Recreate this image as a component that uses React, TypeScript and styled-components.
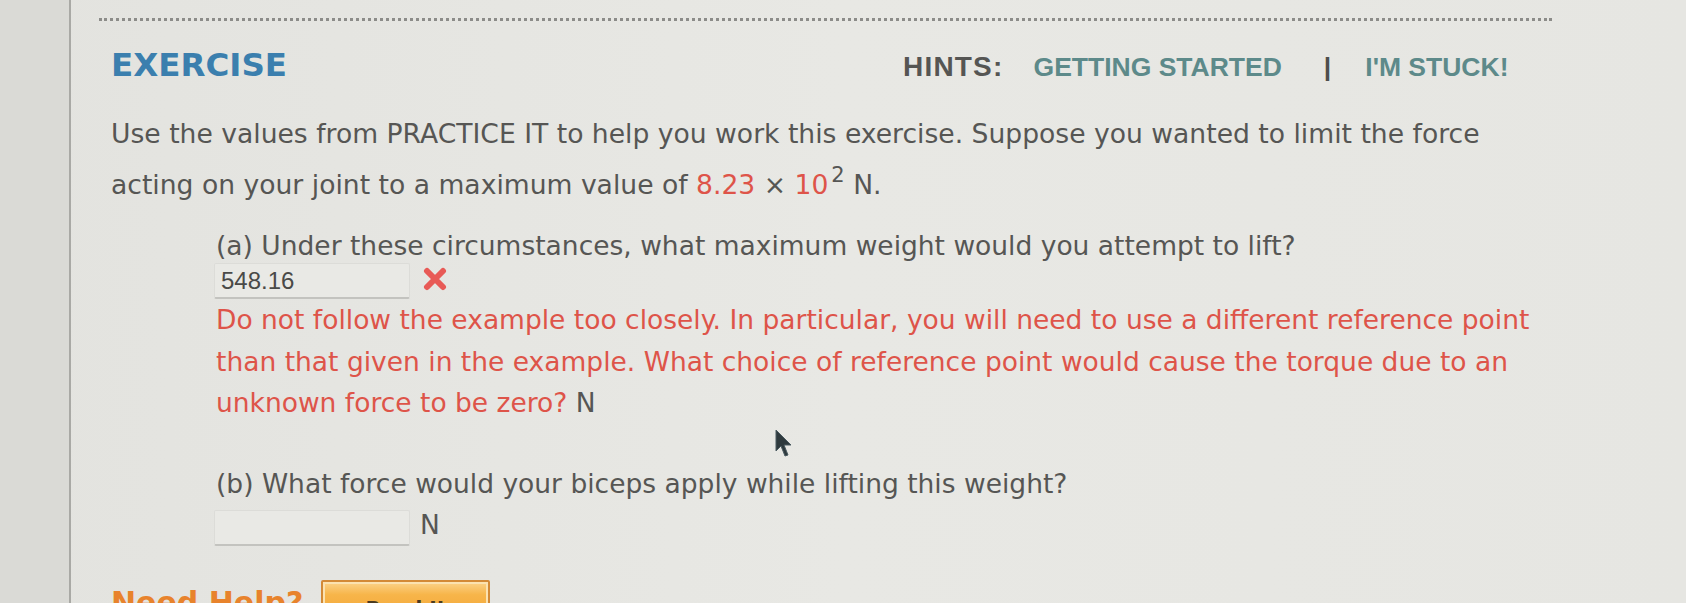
import React from "react";
import styled, { createGlobalStyle } from "styled-components";

const Global = createGlobalStyle`
  html, body { margin: 0; padding: 0; }
  body {
    background: #e5e5e1;
    font-family: "DejaVu Sans", Verdana, sans-serif;
    overflow: hidden;
  }
`;

const Page = styled.div`
  position: relative;
  display: flex;
  width: 1686px;
  height: 603px;
  overflow: hidden;
  background: linear-gradient(90deg, #e3e3df 0%, #e8e8e4 50%, #e6e6e2 100%);
`;

const Gutter = styled.div`
  width: 69px;
  flex: none;
  background: #dadad6;
  border-right: 2px solid #a9a9a5;
`;

const Content = styled.div`
  flex: 1;
  padding-left: 40px;
  display: flex;
  flex-direction: column;
`;

const DottedRule = styled.div`
  margin-top: 18px;
  margin-left: -12px;
  width: 1453px;
  height: 0;
  border-top: 3px dotted #8c8c89;
`;

const Header = styled.div`
  margin-top: 24px;
  display: grid;
  grid-template-columns: 792px auto;
  align-items: baseline;
  height: 40px;
`;

const Title = styled.h1`
  margin: 0;
  font-family: "DejaVu Sans", Verdana, sans-serif;
  font-weight: bold;
  font-size: 32.5px;
  line-height: 40px;
  color: #3b7fae;
`;

const Hints = styled.div`
  display: flex;
  align-items: baseline;
  font-family: "Liberation Sans", Arial, sans-serif;
  font-weight: bold;
  font-size: 26.5px;
  line-height: 40px;
`;

const HintLabel = styled.span`
  color: #555553;
  font-size: 28px;
  letter-spacing: 1.2px;
  margin-right: 30px;
`;

const HintLink = styled.span`
  color: #5d8a8a;
`;

const Sep = styled.span`
  color: #4e4e4c;
  margin: 0 34px 0 42px;
`;

const Para = styled.p`
  margin: 23px 0 0 0;
  font-size: 26.6px;
  line-height: 51px;
  color: #565654;
  width: 1420px;
`;

const Red = styled.span`
  color: #de5449;
`;

const Sup = styled.sup`
  font-size: 21px;
  vertical-align: 12px;
  line-height: 0;
  margin-left: 3px;
`;

const Part = styled.div`
  padding-left: 105px;
  display: flex;
  flex-direction: column;
`;

const Question = styled.div<{ $gap: number }>`
  margin-top: ${(p) => p.$gap}px;
  font-size: 26.5px;
  line-height: 40px;
  color: #565654;
`;

const AnswerRow = styled.div<{ $gap: number }>`
  margin-top: ${(p) => p.$gap}px;
  margin-left: -2px;
  display: flex;
  align-items: flex-end;
  height: 36px;
`;

const AnswerBox = styled.div`
  box-sizing: border-box;
  width: 196px;
  height: 36px;
  padding: 1px 0 0 6px;
  font-family: "Liberation Sans", Arial, sans-serif;
  font-size: 24px;
  line-height: 32px;
  color: #4a4a48;
  background: #e9e9e5;
  border: 1px solid #dcdcd8;
  border-bottom: 2px solid #c3c3bf;
  border-radius: 2px;
`;

const Mark = styled.span`
  display: inline-flex;
  margin: 0 0 4px 13px;
  align-self: center;
`;

const Unit = styled.span`
  margin: 0 0 6px 10px;
  font-size: 26.5px;
  line-height: 30px;
  color: #565654;
`;

const Feedback = styled.div`
  margin-top: 0;
  font-size: 26.5px;
  line-height: 41.5px;
  color: #de5449;
  width: 1345px;
`;

const Gray = styled.span`
  color: #565654;
`;

const HelpRow = styled.div`
  margin-top: 39px;
  display: flex;
  align-items: flex-start;
  gap: 18px;
`;

const HelpText = styled.span`
  font-family: "DejaVu Sans", Verdana, sans-serif;
  font-weight: bold;
  font-size: 30px;
  line-height: 36px;
  color: #e8832c;
`;

const ReadIt = styled.button`
  box-sizing: border-box;
  margin-top: -5px;
  width: 169px;
  height: 46px;
  padding: 10px 0 0 0;
  border: 2px solid #d38a36;
  border-radius: 2px;
  background: linear-gradient(180deg, #fbd38a 0%, #f7b54a 30%, #f2a233 100%);
  box-shadow: inset 0 0 0 2px #fbe2b0;
  font-family: "DejaVu Sans", Verdana, sans-serif;
  font-size: 20px;
  font-weight: bold;
  color: #4a3a20;
  text-align: center;
  line-height: 30px;
`;

const Cursor = styled.svg`
  position: absolute;
  left: 775px;
  top: 429px;
`;

export default function App() {
  return (
    <>
      <Global />
      <Page>
        <Gutter />
        <Content>
          <DottedRule />
          <Header>
            <Title>EXERCISE</Title>
            <Hints>
              <HintLabel>HINTS:</HintLabel>
              <HintLink>GETTING STARTED</HintLink>
              <Sep>|</Sep>
              <HintLink>I'M STUCK!</HintLink>
            </Hints>
          </Header>
          <Para>
            Use the values from PRACTICE IT to help you work this exercise.
            Suppose you wanted to limit the force acting on your joint to a
            maximum value of <Red>8.23</Red> × <Red>10</Red>
            <Sup>2</Sup> N.
          </Para>
          <Part>
            <Question $gap={16}>
              (a) Under these circumstances, what maximum weight would you
              attempt to lift?
            </Question>
            <AnswerRow $gap={-3}>
              <AnswerBox>548.16</AnswerBox>
              <Mark>
                <svg width="24" height="24" viewBox="0 0 24 24">
                  <path
                    d="M4 4 L20 20 M20 4 L4 20"
                    stroke="#e85a56"
                    strokeWidth="6"
                    strokeLinecap="round"
                  />
                </svg>
              </Mark>
            </AnswerRow>
            <Feedback>
              Do not follow the example too closely. In particular, you will
              need to use a different reference point than that given in the
              example. What choice of reference point would cause the torque
              due to an unknown force to be zero? <Gray>N</Gray>
            </Feedback>
            <Question $gap={40}>
              (b) What force would your biceps apply while lifting this weight?
            </Question>
            <AnswerRow $gap={6}>
              <AnswerBox />
              <Unit>N</Unit>
            </AnswerRow>
          </Part>
          <HelpRow>
            <HelpText>Need Help?</HelpText>
            <ReadIt>Read It</ReadIt>
          </HelpRow>
        </Content>
        <Cursor width="20" height="30" viewBox="0 0 20 30">
          <path
            d="M1 1 L1 22 L6 17 L10 27 L13 26 L9 16 L16 16 Z"
            fill="#2f3a3e"
            stroke="#4a5a60"
            strokeWidth="1"
          />
        </Cursor>
      </Page>
    </>
  );
}
